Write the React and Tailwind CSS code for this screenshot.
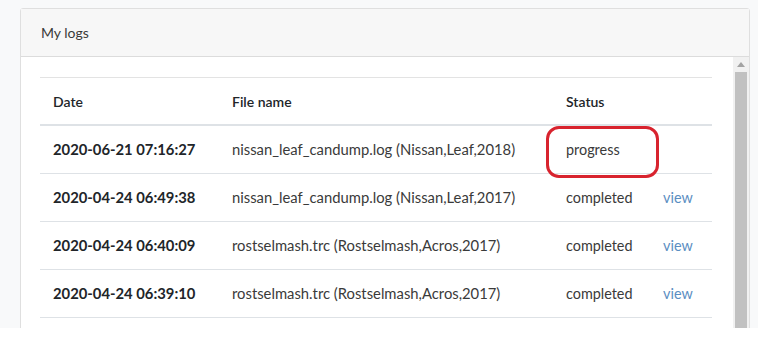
export default function App() {
  const rows = [
    { d: "2020-06-21 07:16:27", f: "nissan_leaf_candump.log (Nissan,Leaf,2018)", s: "progress", v: false },
    { d: "2020-04-24 06:49:38", f: "nissan_leaf_candump.log (Nissan,Leaf,2017)", s: "completed", v: true },
    { d: "2020-04-24 06:40:09", f: "rostselmash.trc (Rostselmash,Acros,2017)", s: "completed", v: true },
    { d: "2020-04-24 06:39:10", f: "rostselmash.trc (Rostselmash,Acros,2017)", s: "completed", v: true },
  ];
  return (
    <div className="w-[758px] h-[339px] bg-white overflow-hidden" style={{ fontFamily: "Lato, 'Noto Sans', sans-serif" }}>
      <div className="h-[328px] bg-[#f8f9fa] pt-2 pl-5 pr-2 overflow-hidden">
        <div className="h-[400px] border border-[#dfdfdf] rounded-t-[3px] bg-white flex flex-col">
          <div className="h-[48px] bg-[#f7f7f7] border-b border-[#dcdcdc] flex items-center pl-5 text-[14px] text-[#3a3a3a]">
            My logs
          </div>
          <div className="flex flex-1">
            <div className="flex-1 pl-[19px] pr-[21px] pt-5">
              <div className="relative border-t border-[#e3e3e3] text-[14px] text-[#212529]">
                <div className="flex h-[48px] items-center border-b-2 border-[#dee2e6] font-semibold">
                  <div className="w-[179px] pl-[13px]">Date</div>
                  <div className="w-[334px] pl-[13px]">File name</div>
                  <div className="w-[98px] pl-[13px]">Status</div>
                  <div className="flex-1"></div>
                </div>
                {rows.map((r, i) => (
                  <div key={i} className="flex h-[48px] items-center border-b border-[#dee2e6]">
                    <div className="w-[179px] pl-[13px] font-bold text-[14.8px]">{r.d}</div>
                    <div className="w-[334px] pl-[13px] text-[#3a3a3a] text-[14.8px]">{r.f}</div>
                    <div className="w-[98px] pl-[13px] text-[#3a3a3a] text-[14.4px]">{r.s}</div>
                    <div className="flex-1 pl-[12px] text-[#5b8ec2] text-[14.4px]">{r.v ? "view" : ""}</div>
                  </div>
                ))}
                <div className="absolute left-[506px] top-[48px] w-[113px] h-[52px] border-[3px] border-[#d8232e] rounded-[13px]"></div>
              </div>
            </div>
            <div className="w-[16px] bg-[#f1f1f1] flex flex-col items-center">
              <div className="h-[15px] flex items-center justify-center">
                <svg width="8" height="5" viewBox="0 0 8 5"><polygon points="4,0 8,5 0,5" fill="#a3a3a3" /></svg>
              </div>
              <div className="w-[12px] h-[300px] bg-[#c1c1c1]"></div>
            </div>
          </div>
        </div>
      </div>
    </div>
  );
}
